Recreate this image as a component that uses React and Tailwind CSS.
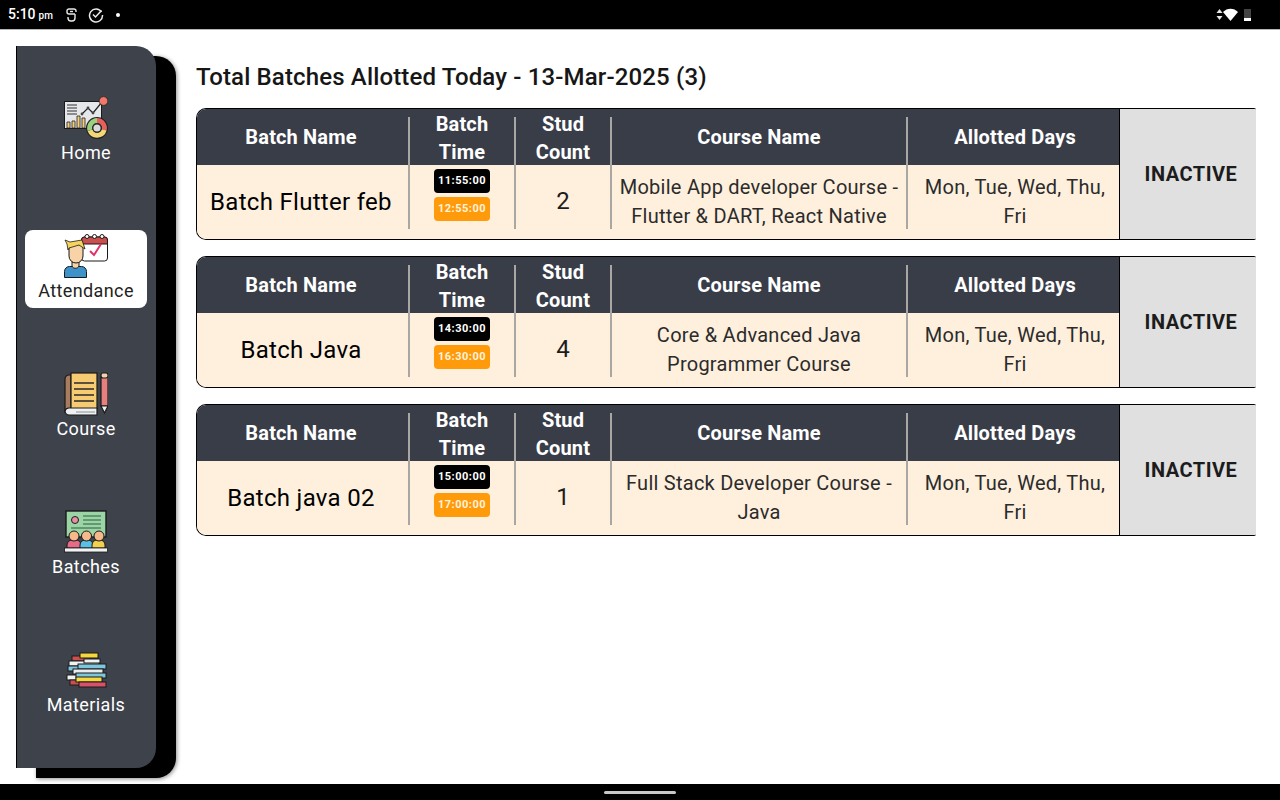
import { Fragment } from 'react'

const batches = [
  {
    name: 'Batch Flutter feb',
    start: '11:55:00',
    end: '12:55:00',
    count: '2',
    course: ['Mobile App developer Course -', 'Flutter & DART, React Native'],
  },
  {
    name: 'Batch Java',
    start: '14:30:00',
    end: '16:30:00',
    count: '4',
    course: ['Core & Advanced Java', 'Programmer Course'],
  },
  {
    name: 'Batch java 02',
    start: '15:00:00',
    end: '17:00:00',
    count: '1',
    course: ['Full Stack Developer Course -', 'Java'],
  },
]

function HomeIcon() {
  return (
    <svg width="44" height="44" viewBox="0 0 44 44" fill="none">
      <rect x="0.5" y="5.5" width="37" height="27" fill="#e6e7ea" stroke="#1a1a1a" />
      <path d="M3 9h10M3 12h10M3 15h10M3 18h10" stroke="#333" strokeWidth="1.2" />
      <path d="M18 18l6-6 5 5 9-11" stroke="#222" strokeWidth="1.2" />
      <circle cx="18" cy="18" r="1.4" fill="#444" />
      <circle cx="24" cy="12" r="1.4" fill="#444" />
      <circle cx="29" cy="17" r="1.4" fill="#444" />
      <circle cx="39.500" cy="5" r="4.400" fill="#f0786a" stroke="#1a1a1a" strokeWidth="0.7" />
      <path d="M3 26h3v6H3zM8 25h3v7H8zM13 20h3v12h-3zM18 22h3v10h-3z" fill="#f3cd7a" stroke="#222" strokeWidth="0.8" />
      <circle cx="33" cy="32" r="11" fill="#222" />
      <path d="M33 22a10 10 0 0 1 9.6 12.5l-4.8-1.3A5 5 0 0 0 33 27z" fill="#e8605c" />
      <path d="M42.6 34.5a10 10 0 0 1-19 .5l4.8-1.4a5 5 0 0 0 9.4-.4z" fill="#f3d878" />
      <path d="M23.6 35A10 10 0 0 1 33 22v5a5 5 0 0 0-4.6 6.6z" fill="#9bd07f" />
      <circle cx="33" cy="32" r="4.2" fill="#d8dadd" stroke="#222" strokeWidth="1.2" />
    </svg>
  )
}

function AttendanceIcon() {
  return (
    <svg width="44" height="44" viewBox="0 0 44 44" fill="none">
      <rect x="17.500" y="3" width="26" height="24" rx="3" fill="#fff" stroke="#1a1a1a" />
      <path d="M17.500 10V6a3 3 0 0 1 3-3h20a3 3 0 0 1 3 3v4z" fill="#c9504f" stroke="#1a1a1a" />
      <circle cx="23" cy="2.500" r="2" fill="#fff" stroke="#1a1a1a" />
      <circle cx="30.500" cy="2.500" r="2" fill="#fff" stroke="#1a1a1a" />
      <circle cx="38" cy="2.500" r="2" fill="#fff" stroke="#1a1a1a" />
      <path d="M26 17l4 4 7-11" stroke="#e0336b" strokeWidth="2" />
      <path d="M0.500 43.500v-6a5 5 0 0 1 5-5h12a5 5 0 0 1 5 5v6z" fill="#3d93c9" stroke="#1a1a1a" />
      <path d="M8 32c1 3 6 3 7 0v-4H8z" fill="#f8d3a8" stroke="#1a1a1a" />
      <path d="M5 12c2-2 12-2 14 0v10a7 7 0 0 1-14 0z" fill="#f8d3a8" stroke="#1a1a1a" />
      <path d="M1 6l5 2 12-2 3 9-6-4-10 3-1 2-1-6z" fill="#f5d45c" stroke="#1a1a1a" strokeWidth="0.800" />
    </svg>
  )
}

function CourseIcon() {
  return (
    <svg width="44" height="44" viewBox="0 0 44 44" fill="none">
      <path d="M1 7a4 4 0 0 1 4-4h2v34H5a4 4 0 0 0-4 2z" fill="#a87c5f" stroke="#1a1a1a" strokeWidth="1.200" />
      <rect x="7" y="1" width="26" height="36" fill="#f7cb72" stroke="#1a1a1a" strokeWidth="1.200" />
      <path d="M10 11h20M10 17h20M10 23h20M10 29h20" stroke="#2a2a2a" strokeWidth="1.400" />
      <path d="M1 39a4 4 0 0 1 4-3h28v7H5a4 4 0 0 1-4-4z" fill="#eef0f2" stroke="#1a1a1a" strokeWidth="1.200" />
      <path d="M12 40h19" stroke="#8a8f96" strokeWidth="1" />
      <rect x="37" y="5" width="7" height="29" fill="#e58080" stroke="#1a1a1a" strokeWidth="1.200" />
      <rect x="37" y="1" width="7" height="5" rx="2" fill="#f1d0b0" stroke="#1a1a1a" strokeWidth="1.200" />
      <path d="M37 34h7l-3.500 7z" fill="#eee" stroke="#1a1a1a" strokeWidth="1.200" />
    </svg>
  )
}

function BatchesIcon() {
  return (
    <svg width="44" height="44" viewBox="0 0 44 44" fill="none">
      <rect x="2" y="1" width="40" height="26" fill="#9bd5a6" stroke="#1a1a1a" strokeWidth="1.400" />
      <circle cx="11" cy="10" r="3.500" fill="#ea8ca4" stroke="#1a1a1a" />
      <path d="M19 6h18M19 10h18M19 14h18M7 18h30" stroke="#2f5d3b" strokeWidth="1.200" />
      <path d="M3 38v-3a5 5 0 0 1 5-5h4a5 5 0 0 1 5 5v3z" fill="#e56b87" stroke="#1a1a1a" />
      <path d="M16 38v-3a5 5 0 0 1 5-5h3a5 5 0 0 1 5 5v3z" fill="#5bc0e6" stroke="#1a1a1a" />
      <path d="M28 38v-3a5 5 0 0 1 5-5h3a5 5 0 0 1 5 5v3z" fill="#f5d04e" stroke="#1a1a1a" />
      <circle cx="10" cy="26" r="5" fill="#f6b98b" stroke="#1a1a1a" />
      <circle cx="22.500" cy="26" r="5" fill="#f6b98b" stroke="#1a1a1a" />
      <circle cx="35" cy="26" r="5" fill="#f6b98b" stroke="#1a1a1a" />
      <rect x="0.500" y="38" width="43" height="4" fill="#f1f2f4" stroke="#1a1a1a" strokeWidth="0.800" />
    </svg>
  )
}

function MaterialsIcon() {
  return (
    <svg className="mb-[4px]" width="44" height="36" viewBox="0 0 44 36" fill="none">
      <g stroke="#1a1a1a" strokeWidth="1">
        <rect x="8" y="4" width="18" height="5" fill="#c9504f" />
        <rect x="16" y="1" width="18" height="5" fill="#f5d93c" />
        <rect x="5" y="9" width="30" height="5" fill="#f1f2f4" />
        <rect x="20" y="7" width="16" height="4" fill="#f1f2f4" />
        <rect x="4" y="14" width="20" height="5" fill="#7dc7dc" />
        <rect x="14" y="12" width="28" height="5" fill="#7dc7dc" />
        <rect x="9" y="17" width="30" height="5" fill="#e9ebee" />
        <rect x="3" y="23" width="20" height="5" fill="#f1f2f4" />
        <rect x="12" y="21" width="30" height="5" fill="#7dc7dc" />
        <rect x="6" y="28" width="18" height="5" fill="#c9504f" />
        <rect x="12" y="25" width="26" height="5" fill="#f5d93c" />
        <rect x="15" y="30" width="27" height="5" fill="#d9506a" />
      </g>
    </svg>
  )
}

const navItems = [
  { label: 'Home', Icon: HomeIcon },
  { label: 'Attendance', Icon: AttendanceIcon, active: true },
  { label: 'Course', Icon: CourseIcon },
  { label: 'Batches', Icon: BatchesIcon },
  { label: 'Materials', Icon: MaterialsIcon },
]

function StatusBar() {
  return (
    <div className="flex h-[30px] shrink-0 items-center justify-between border-b border-[#b5b5b5] bg-black pl-[8px] pr-[29px] text-white">
      <div className="flex items-center">
        <span className="w-[46px] text-[14px] font-medium">
          5:10<span className="ml-[3px] text-[10px]">pm</span>
        </span>
        <svg className="ml-[12px]" width="11" height="14" viewBox="0 0 11 14" fill="none" stroke="#e8e8e8" strokeWidth="1.400">
          <path d="M10 4V3a2 2 0 0 0-2-2H3a2 2 0 0 0-2 2v1c0 1 1 2 2 2h6M2 9v1a3 3 0 0 0 3 3h1a3 3 0 0 0 3-3V6" />
          <path d="M4 3.500h3" />
        </svg>
        <svg className="ml-[11px]" width="16" height="16" viewBox="0 0 16 16" fill="none" stroke="#e8e8e8" strokeWidth="1.500">
          <path d="M13.500 5A6.500 6.500 0 1 0 14.500 8" />
          <path d="M5 7.500l2.500 2.500 6-6.500" />
        </svg>
        <span className="ml-[12px] h-[4px] w-[4px] rounded-full bg-white" />
      </div>
      <div className="flex items-center">
        <svg width="7" height="13" viewBox="0 0 7 13" fill="#e8e8e8">
          <path d="M3.500 1L6.500 5H.5zM.5 8h6l-3 4z" />
        </svg>
        <svg width="15" height="13" viewBox="0 0 15 13" fill="#fff">
          <path d="M0 4C4-.5 11-.5 15 4L7.500 13z" />
        </svg>
        <svg className="ml-[6px]" width="7" height="12" viewBox="0 0 7 12">
          <rect width="7" height="12" fill="#444" />
          <rect y="9" width="7" height="3" fill="#fff" />
        </svg>
      </div>
    </div>
  )
}

function Sidebar() {
  return (
    <aside className="my-[16px] ml-[16px] flex w-[140px] shrink-0 flex-col items-center gap-[60px] rounded-r-[20px] border-l border-black bg-[#3e424b] py-[46px] pr-[1px] shadow-[20px_10px_0_#000,21px_11px_4px_rgba(0,0,0,0.45)]">
      {navItems.map(({ label, Icon, active }) => (
        <div
          key={label}
          className={`flex h-[78px] w-[122px] flex-col items-center justify-end rounded-[8px] pb-[5px] ${active ? 'bg-white text-[#222]' : 'text-white'}`}
        >
          <Icon />
          <span className="mt-[1px] text-[18px] leading-[24px] tracking-[0.4px]">{label}</span>
        </div>
      ))}
    </aside>
  )
}

function BodyCell({ className = '', first, children }) {
  return (
    <div className="pb-[10px]">
      <div className={`flex h-full flex-col items-center justify-center text-center ${first ? '' : 'border-l-2 border-[#a9a7a3]'} ${className}`}>
        {children}
      </div>
    </div>
  )
}

function HeadCell({ className = '', first, twoLines, children }) {
  return (
    <div className="pt-[8px]">
      <div className={`flex h-full flex-col items-center justify-center text-center text-[20px] font-bold leading-[28px] tracking-[0.15px] text-white ${first ? '' : 'border-l-2 border-[#a9a7a3]'} ${className}`}>
        <div className={`flex flex-col ${twoLines ? '-mt-[7px]' : '-mt-[9px]'}`}>{children}</div>
      </div>
    </div>
  )
}

function BatchCard({ batch }) {
  return (
    <div className="flex h-[132px] overflow-hidden rounded-l-[10px] rounded-r-[2px] border border-r-0 border-black">
      <div className="grid w-[922px] shrink-0 grid-cols-[211px_106px_96px_296px_213px] grid-rows-[56px_1fr]">
        <div className="col-span-5 grid grid-cols-subgrid bg-[#393d48]">
          <HeadCell first className="pr-[3px]">Batch Name</HeadCell>
          <HeadCell twoLines>
            <span>Batch</span>
            <span>Time</span>
          </HeadCell>
          <HeadCell twoLines>
            <span>Stud</span>
            <span>Count</span>
          </HeadCell>
          <HeadCell>Course Name</HeadCell>
          <HeadCell className="pl-[3px]">Allotted Days</HeadCell>
        </div>
        <div className="col-span-5 grid grid-cols-subgrid bg-[#fff0de] text-[#1c1c1c]">
          <BodyCell first className="pr-[3px] pt-[9px]">
            <span className="text-[24px] font-normal tracking-[0.3px] text-black">{batch.name}</span>
          </BodyCell>
          <BodyCell className="pb-[4px]">
            <div className="flex flex-col gap-[4px]">
              <span className="flex h-[24px] w-[56px] items-center justify-center rounded-[4px] bg-black text-[11px] font-bold tracking-[0.5px] text-white">
                {batch.start}
              </span>
              <span className="flex h-[24px] w-[56px] items-center justify-center rounded-[4px] bg-[#ff9a0b] text-[11px] font-bold tracking-[0.5px] text-[#fff3dc]">
                {batch.end}
              </span>
            </div>
          </BodyCell>
          <BodyCell className="pt-[8px]">
            <span className="text-[24px] leading-[30px]">{batch.count}</span>
          </BodyCell>
          <BodyCell className="pt-[9px]">
            <p className="-my-[4px] text-[20px] leading-[29px] tracking-[0.25px] text-[#2b2b2b]">
              {batch.course.map((line, i) => (
                <Fragment key={line}>
                  {i > 0 && <br />}
                  {line}
                </Fragment>
              ))}
            </p>
          </BodyCell>
          <BodyCell className="pl-[3px] pt-[9px]">
            <p className="-my-[4px] text-[20px] leading-[29px] tracking-[0.25px] text-[#2b2b2b]">
              Mon, Tue, Wed, Thu,
              <br />
              Fri
            </p>
          </BodyCell>
        </div>
      </div>
      <div className="flex flex-1 items-center justify-center border-l border-black bg-[#e0e0e0] pl-[6px]">
        <span className="text-[20px] font-bold tracking-[0.5px] text-[#1c1c1c]">INACTIVE</span>
      </div>
    </div>
  )
}

export default function App() {
  return (
    <div className="flex h-[800px] w-[1280px] flex-col overflow-hidden bg-white font-['Roboto',sans-serif]">
      <StatusBar />
      <div className="flex min-h-0 flex-1">
        <Sidebar />
        <main className="ml-[40px] flex-1 pr-[24px] pt-[31px]">
          <h1 className="text-[24px] font-medium leading-[32px] tracking-[0.15px] text-[#161616]">
            Total Batches Allotted Today - 13-Mar-2025 (3)
          </h1>
          <div className="mt-[15px] flex flex-col gap-[16px]">
            {batches.map((batch) => (
              <BatchCard key={batch.name} batch={batch} />
            ))}
          </div>
        </main>
      </div>
      <div className="flex h-[16px] shrink-0 justify-center bg-black pt-[7px]">
        <div className="h-[3px] w-[72px] rounded-full bg-[#c8c8c8]" />
      </div>
    </div>
  )
}
